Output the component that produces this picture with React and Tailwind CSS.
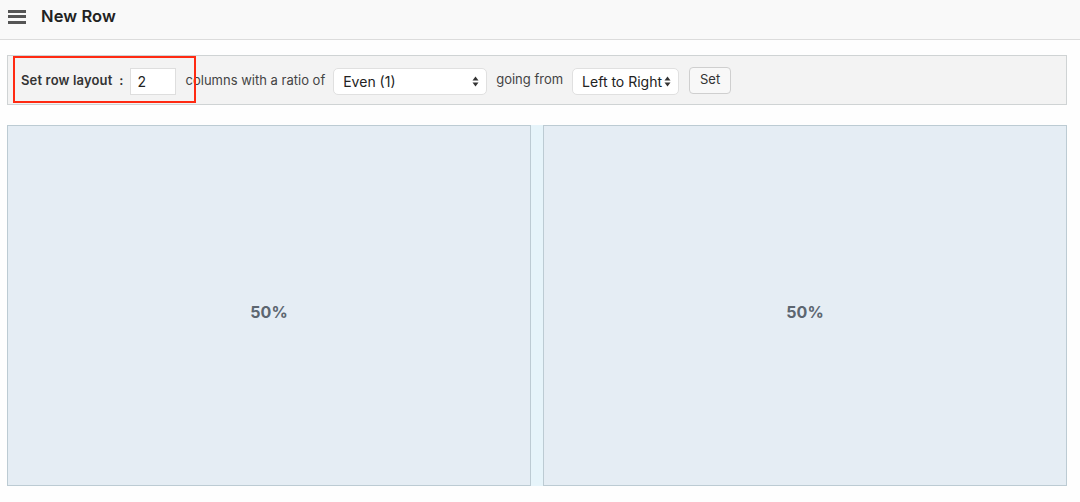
import React from "react";

const Arrows = () => (
  <svg width="7" height="11" viewBox="0 0 7 11" className="shrink-0">
    <path d="M3.5 0.5 L6.5 4.5 L0.5 4.5 Z" fill="#333" />
    <path d="M3.5 10.5 L6.5 6.5 L0.5 6.5 Z" fill="#333" />
  </svg>
);

const Select = ({ label, width }) => (
  <div
    className={`flex items-center justify-between h-[27px] rounded-[5px] border border-[#e0e0e0] bg-white pl-[9px] pr-[7px] text-[14px] text-[#222] ${width}`}
  >
    <span>{label}</span>
    <Arrows />
  </div>
);

const Column = ({ label }) => (
  <div className="flex-1 flex items-center justify-center pt-[12px] bg-[#e5edf4] border border-[#bccbd3]">
    <span className="text-[16px] font-bold text-[#5c6670]">{label}</span>
  </div>
);

const App = () => {
  return (
    <div className="w-[1080px] h-[502px] bg-[#fefefe] font-['Inter','Liberation_Sans',sans-serif] text-[#333]">
      <header className="flex items-center h-[40px] pb-[6px] bg-[#f9f9f9] border-b border-[#dcdcdc]">
        <div className="ml-[8px] flex flex-col gap-[2.5px] w-[18px]">
          <span className="h-[3px] bg-[#555]" />
          <span className="h-[3px] bg-[#555]" />
          <span className="h-[3px] bg-[#555]" />
        </div>
        <h1 className="ml-[15px] text-[16.5px] font-semibold text-[#222] tracking-[0.1px]">New Row</h1>
      </header>

      <div className="relative mt-[15px] ml-[7px] mr-[13px] h-[50px] flex items-center bg-[#f3f3f3] border border-[#cfd3d4] pt-[2px] pl-[13px] text-[13px]">
        <span className="font-semibold text-[#333] tracking-[0.15px]">Set row layout&nbsp;&nbsp;:</span>
        <input
          type="text"
          defaultValue="2"
          className="ml-[6px] w-[46px] h-[27px] bg-white border border-[#dedede] px-[7px] text-[14px] text-[#222] outline-none"
        />
        <span className="ml-[10px] text-[#444]">columns with a ratio of</span>
        <div className="ml-[8px]">
          <Select label="Even (1)" width="w-[154px]" />
        </div>
        <span className="ml-[9px] -mt-[2px] text-[#444]">going from</span>
        <div className="ml-[9px]">
          <Select label="Left to Right" width="w-[107px]" />
        </div>
        <button className="ml-[10px] h-[27px] w-[42px] -mt-[2px] rounded-[4px] border border-[#cfcfcf] bg-[#f8f8f8] text-[13px] text-[#333]">
          Set
        </button>
        <div className="absolute left-[5px] top-0 w-[183px] h-[47px] border-2 border-[#ff2a12] pointer-events-none" />
      </div>

      <div className="mt-[20px] ml-[7px] mr-[13px] h-[361px] flex gap-[12px] bg-[#e6f4fa]">
        <Column label="50%" />
        <Column label="50%" />
      </div>
    </div>
  );
};

export default App;
